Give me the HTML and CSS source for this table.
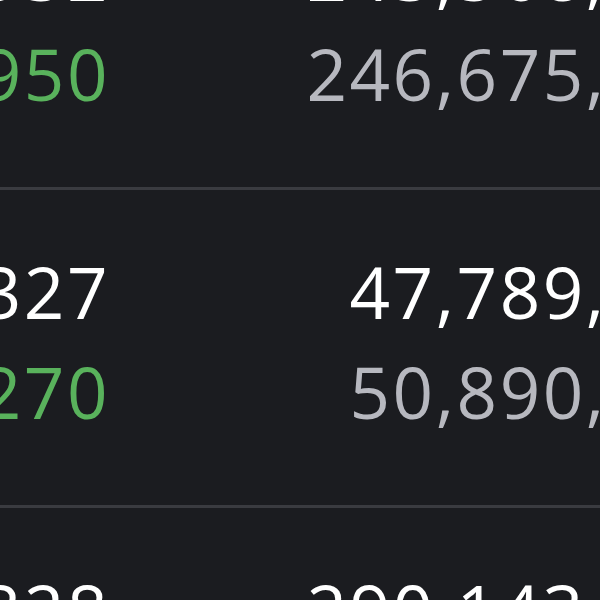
FILE: index.html
```html
<!DOCTYPE html>
<html>
<head>
<meta charset="utf-8">
<link rel="stylesheet" href="styles.css">
</head>
<body>
<div class="table">
  <div class="block first">
    <div class="row">
      <span class="left white">12,932</span>
      <span class="right white">243,568,000</span>
    </div>
    <div class="row">
      <span class="left green">13,950</span>
      <span class="right gray">246,675,000</span>
    </div>
  </div>
  <div class="block">
    <div class="row">
      <span class="left white">8,327</span>
      <span class="right white">47,789,000</span>
    </div>
    <div class="row">
      <span class="left green">9,270</span>
      <span class="right gray">50,890,000</span>
    </div>
  </div>
  <div class="block">
    <div class="row">
      <span class="left white">22,328</span>
      <span class="right white">290,143,000</span>
    </div>
    <div class="row">
      <span class="left green">23,410</span>
      <span class="right gray">295,870,000</span>
    </div>
  </div>
</div>
</body>
</html>
```
FILE: styles.css
```css
html, body {
  margin: 0;
  padding: 0;
  background: #1b1c20;
  overflow: hidden;
  width: 600px;
  height: 600px;
}
.table {
  margin-top: -128px;
  font-family: "Open Sans", "Noto Sans", sans-serif;
  font-size: 71px;
  font-weight: 500;
  letter-spacing: 2.5px;
}
.block {
  padding: 52px 0 63px;
  border-bottom: 3px solid #3a3b40;
}
.row {
  display: grid;
  grid-template-columns: 110px 626px;
  line-height: 100px;
  height: 100px;
  white-space: nowrap;
}
.left {
  text-align: right;
  justify-self: end;
}
.right {
  text-align: right;
  justify-self: end;
}
.white { color: #ffffff; }
.green { color: #59b25c; }
.gray { color: #b7b8bf; }
```
